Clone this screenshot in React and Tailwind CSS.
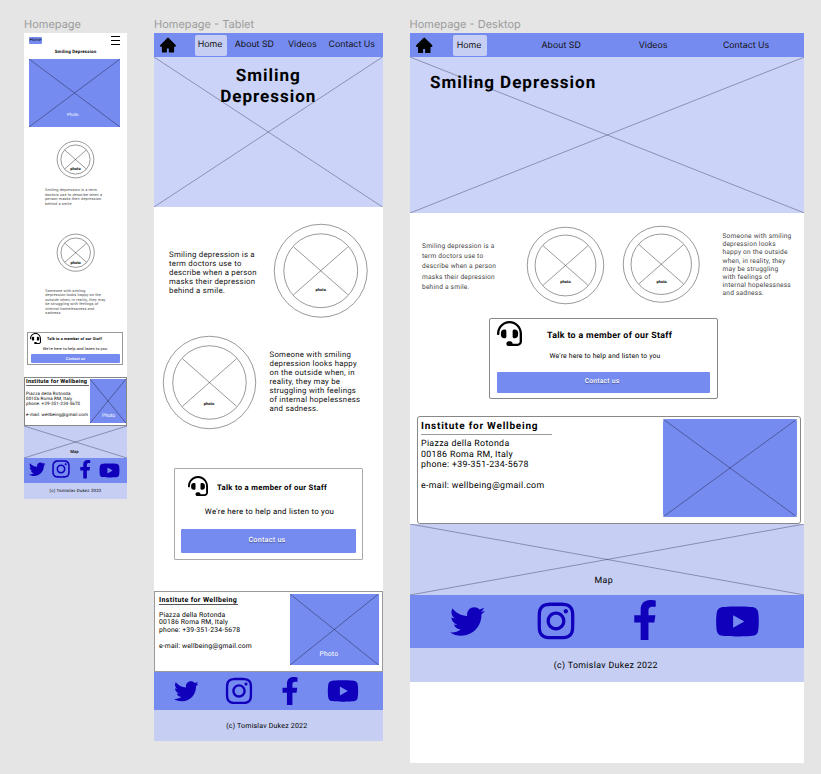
import { FaTwitter, FaInstagram, FaFacebookF, FaYoutube, FaHeadset } from "react-icons/fa";
import { AiFillHome } from "react-icons/ai";

function Cross({ className = "", opacity = 0.75 }) {
  return (
    <svg className={`absolute inset-0 w-full h-full ${className}`} viewBox="0 0 100 100" preserveAspectRatio="none" aria-hidden="true">
      <path d="M0 0 L100 100 M0 100 L100 0" stroke="#1a1d3a" strokeOpacity={opacity} strokeWidth="0.6" vectorEffect="non-scaling-stroke" fill="none" />
    </svg>
  );
}

function RoundPhoto({ className, labelClass }) {
  return (
    <div className={`relative shrink-0 flex justify-center ${className}`}>
      <svg className="absolute inset-0 w-full h-full overflow-visible" viewBox="0 0 100 100" aria-hidden="true">
        <g fill="none" stroke="#333" strokeWidth="0.5">
          <circle cx="50" cy="50" r="49.7" vectorEffect="non-scaling-stroke" />
          <circle cx="50" cy="50" r="39.5" vectorEffect="non-scaling-stroke" />
          <path d="M21 24.5 L79 75.5 M21 75.5 L79 24.5" vectorEffect="non-scaling-stroke" />
        </g>
      </svg>
      <span className={`relative font-bold text-black leading-none ${labelClass}`}>photo</span>
    </div>
  );
}

function Lines({ lines, className }) {
  return (
    <div className={`whitespace-nowrap ${className}`}>
      {lines.map((line, i) => (
        <div key={i}>{line || "\u00a0"}</div>
      ))}
    </div>
  );
}

function FrameLabel({ children }) {
  return <div className="h-4 whitespace-nowrap font-['Inter',sans-serif] text-[11px] leading-[14px] text-[#9b9b9b]">{children}</div>;
}

const address = ["Piazza della Rotonda", "00186 Roma RM, Italy", "phone: +39-351-234-5678", "", "e-mail: wellbeing@gmail.com"];

function Mobile() {
  return (
    <section className="w-[103px] shrink-0">
      <FrameLabel>Homepage</FrameLabel>
      <div className="h-[466px] bg-white flex flex-col">
        <div className="flex justify-between h-[16px] pl-[5px] pr-[7px] pt-[3px]">
          <div className="mt-px w-[13px] h-[7px] rounded-[1px] bg-[#768bf0] text-center text-[4.2px] leading-[8px]">Home</div>
          <div className="flex flex-col gap-[2.7px] w-[9px]">
            <i className="h-[1.2px] bg-black" />
            <i className="h-[1.2px] bg-black" />
            <i className="h-[1.2px] bg-black" />
          </div>
        </div>
        <h1 className="h-[10px] text-center text-[4.5px] leading-[7px] font-bold tracking-[0.13px]">Smiling Depression</h1>
        <div className="relative ml-[5px] w-[91px] h-[68px] bg-[#768bf0] shrink-0">
          <Cross />
          <span className="relative block ml-[38px] mt-[53px] text-[4.4px] leading-[8px] text-white">Photo</span>
        </div>
        <RoundPhoto className="mt-[14px] ml-[33px] w-[37px] h-[37px]" labelClass="pt-[26px] text-[4px]" />
        <Lines
          className="mt-[10.5px] ml-[21px] text-[3.8px] leading-[4.4px] tracking-[0.15px] text-[#444]"
          lines={["Smiling depression is a term", "doctors use to describe when a", "person masks their depression", "behind a smile."]}
        />
        <RoundPhoto className="mt-[27.9px] ml-[33px] w-[37.4px] h-[37.4px]" labelClass="pt-[27px] text-[4px]" />
        <Lines
          className="mt-[17.5px] ml-[21.3px] text-[3.8px] leading-[4.4px] tracking-[0.15px] text-[#444]"
          lines={["Someone with smiling", "depression looks happy on the", "outside when, in reality, they may", "be struggling with feelings of", "internal homelessness and", "sadness."]}
        />
        <div className="mt-[16.7px] ml-[3px] w-[96px] h-[33px] border border-[#999] shrink-0">
          <div className="flex items-center h-[11px] pl-[2px]">
            <FaHeadset className="w-[11px] h-[11px]" />
            <span className="ml-[6px] whitespace-nowrap text-[3.9px] leading-[5px] font-bold tracking-[0.13px]">Talk to a member of our Staff</span>
          </div>
          <p className="h-[10px] text-center whitespace-nowrap text-[3.95px] leading-[10px] tracking-[0.1px]">We're here to help and listen to you</p>
          <div className="ml-[3px] w-[89px] h-[9px] rounded-[1px] bg-[#768bf0] text-center text-[4px] leading-[9px] font-medium text-white">Contact us</div>
        </div>
        <div className="mt-[12px] flex justify-between h-[49px] shrink-0 border border-[#888] pl-[1px]">
          <div>
            <h2 className="h-[8px] w-[63px] border-b border-[#666] whitespace-nowrap text-[5.6px] leading-[9px] font-bold tracking-[0.24px]">Institute for Wellbeing</h2>
            <Lines className="mt-[5.5px] text-[4.5px] leading-[5.3px] tracking-[0.13px]" lines={address} />
          </div>
          <div className="relative mt-px w-[36px] h-[44px] bg-[#768bf0]">
            <Cross />
            <span className="relative block pl-[12px] pt-[33px] text-[5px] leading-[9px] text-white">Photo</span>
          </div>
        </div>
        <div className="relative h-[32px] shrink-0 bg-[#c6cef3] pt-[23px] text-center text-[4.2px] leading-[7px] font-medium">
          <Cross opacity={0.6} />
          <span className="relative pr-[2px]">Map</span>
        </div>
        <div className="flex items-start h-[25px] shrink-0 bg-[#768bf0] pt-[2px] text-[#1100bb]">
          <FaTwitter className="ml-[5px] mt-[1px] w-[16.5px] h-[16.5px]" />
          <FaInstagram className="ml-[5.5px] mt-[-1px] w-[20px] h-[20px]" />
          <FaFacebookF className="ml-[4.5px] w-[18.5px] h-[18.5px]" />
          <FaYoutube className="ml-[5px] mt-[-0.5px] w-[21px] h-[21px]" />
        </div>
        <div className="h-[16px] bg-[#c6cef3] text-center text-[4.4px] leading-[17px] tracking-[0.17px]">(c) Tomislav Dukez 2022</div>
      </div>
    </section>
  );
}

function Tablet() {
  return (
    <section className="ml-[27px] w-[228.5px] shrink-0">
      <FrameLabel>Homepage - Tablet</FrameLabel>
      <div className="h-[708px] bg-white flex flex-col">
        <nav className="flex items-center h-[24px] bg-[#768bf0] font-['Inter',sans-serif] text-[8.8px] leading-[12px] whitespace-nowrap text-[#111]">
          <AiFillHome className="ml-[5px] w-[18px] h-[18px] text-black" />
          <span className="ml-[18px] w-[32px] h-[21px] rounded-[2px] bg-[#c6cef3] pr-[2px] text-center leading-[20px]">Home</span>
          <span className="ml-[7.7px]">About SD</span>
          <span className="ml-[14px]">Videos</span>
          <span className="ml-[12px]">Contact Us</span>
        </nav>
        <div className="relative h-[150px] bg-[#cbd3f8] shrink-0">
          <Cross opacity={0.6} />
          <h1 className="relative pt-[9px] text-center text-[17.1px] leading-[20.5px] font-bold tracking-[0.95px] text-black">
            Smiling
            <br />
            Depression
          </h1>
        </div>
        <div className="flex mt-[17px] h-[93px] shrink-0">
          <Lines
            className="ml-[15px] mt-[26px] w-[105px] text-[7.8px] leading-[9px] tracking-[0.25px] text-[#111]"
            lines={["Smiling depression is a", "term doctors use to", "describe when a person", "masks their depression", "behind a smile."]}
          />
          <RoundPhoto className="w-[93.5px] h-[93.5px]" labelClass="pt-[64px] text-[4px]" />
        </div>
        <div className="flex mt-[19px] h-[93px] shrink-0">
          <RoundPhoto className="ml-[9px] w-[93px] h-[93px]" labelClass="pt-[66px] pr-[1px] text-[4px]" />
          <Lines
            className="ml-[13.5px] mt-[13.5px] text-[7.8px] leading-[9px] tracking-[0.25px] text-[#111]"
            lines={["Someone with smiling", "depression looks happy", "on the outside when, in", "reality, they may be", "struggling with feelings", "of internal hopelessness", "and sadness."]}
          />
        </div>
        <div className="mt-[39px] ml-[20px] w-[189px] h-[92px] shrink-0 border border-[#aaa] rounded-[1px]">
          <div className="flex items-center h-[37px] pl-[13px]">
            <FaHeadset className="mt-[-4px] w-[20px] h-[20px]" />
            <span className="ml-[9px] whitespace-nowrap text-[7.7px] font-bold tracking-[0.31px]">Talk to a member of our Staff</span>
          </div>
          <p className="h-[23px] pl-[2px] text-center whitespace-nowrap text-[7.8px] leading-[11px] tracking-[0.25px]">We're here to help and listen to you</p>
          <div className="ml-[6px] w-[175px] h-[24px] rounded-[1px] bg-[#768bf0] pr-[3px] text-center text-[7.2px] leading-[22px] font-medium tracking-[0.25px] text-white [text-shadow:0_1px_1px_#0006]">Contact us</div>
        </div>
        <div className="mt-[31px] flex justify-between h-[81px] shrink-0 border border-[#999] pl-[4px] pr-[3px]">
          <div>
            <h2 className="h-[13px] w-[79px] border-b border-[#555] whitespace-nowrap text-[7px] leading-[17px] font-bold tracking-[0.37px]">Institute for Wellbeing</h2>
            <Lines className="mt-[6.5px] text-[6.8px] leading-[7.8px] tracking-[0.16px]" lines={address} />
          </div>
          <div className="relative mt-[2px] w-[88.5px] h-[71px] bg-[#768bf0]">
            <Cross />
            <span className="relative block pl-[29.5px] pt-[55px] text-[6.8px] leading-[10px] tracking-[0.15px] text-white">Photo</span>
          </div>
        </div>
        <div className="flex items-center h-[38px] shrink-0 bg-[#768bf0] text-[#1100bb]">
          <FaTwitter className="ml-[19.5px] w-[24.5px] h-[24.5px]" />
          <FaInstagram className="ml-[26px] w-[30px] h-[30px]" />
          <FaFacebookF className="ml-[21.5px] w-[28px] h-[28px]" />
          <FaYoutube className="ml-[23px] w-[32px] h-[32px]" />
        </div>
        <div className="h-[31px] bg-[#c6cef3] pr-[3px] text-center text-[7px] leading-[32px] tracking-[0.2px]">(c) Tomislav Dukez 2022</div>
      </div>
    </section>
  );
}

function Desktop() {
  return (
    <section className="ml-[27px] w-[394.5px] shrink-0">
      <FrameLabel>Homepage - Desktop</FrameLabel>
      <div className="h-[730px] bg-white flex flex-col">
        <nav className="flex items-center h-[24px] bg-[#768bf0] font-['Inter',sans-serif] text-[8.8px] leading-[12px] whitespace-nowrap text-[#111]">
          <AiFillHome className="ml-[5.5px] w-[18.5px] h-[18.5px] text-black" />
          <span className="ml-[19.5px] w-[34px] h-[21px] rounded-[2px] bg-[#c6cef3] pr-[2px] text-center leading-[22px]">Home</span>
          <span className="ml-[54.5px] pt-[2px]">About SD</span>
          <span className="ml-[58px] pt-[2px]">Videos</span>
          <span className="ml-[55.5px] pt-[2px]">Contact Us</span>
        </nav>
        <div className="relative h-[156px] bg-[#cbd3f8] shrink-0">
          <Cross opacity={0.6} />
          <h1 className="relative pl-[20.5px] pt-[15.5px] text-[17.1px] leading-[20px] font-bold tracking-[0.95px] text-black">Smiling Depression</h1>
        </div>
        <div className="flex h-[105px] shrink-0 pl-[12.5px]">
          <Lines
            className="mt-[27.5px] w-[105px] text-[6.6px] leading-[10.4px] tracking-[0.21px] text-[#444]"
            lines={["Smiling depression is a", "term doctors use to", "describe when a person", "masks their depression", "behind a smile."]}
          />
          <RoundPhoto className="mt-[13.5px] w-[77px] h-[77px]" labelClass="pt-[53px] text-[4px]" />
          <RoundPhoto className="mt-[13px] ml-[19.3px] w-[76.5px] h-[76.5px]" labelClass="pt-[54px] text-[4px]" />
          <Lines
            className="ml-[22.7px] mt-[19px] text-[6.6px] leading-[8.2px] tracking-[0.21px] text-[#444]"
            lines={["Someone with smiling", "depression looks", "happy on the outside", "when, in reality, they", "may be struggling", "with feelings of", "internal hopelessness", "and sadness."]}
          />
        </div>
        <div className="ml-[79.5px] w-[229px] h-[81px] shrink-0 border border-[#888] rounded-[2px]">
          <div className="flex h-[32px] pl-[7px]">
            <FaHeadset className="mt-[2px] w-[25px] h-[25px]" />
            <span className="ml-[25px] mt-[11px] whitespace-nowrap text-[8.8px] leading-[12px] font-bold tracking-[0.33px]">Talk to a member of our Staff</span>
          </div>
          <p className="h-[21px] pl-[3px] text-center whitespace-nowrap text-[6.8px] leading-[11px] tracking-[0.17px]">We're here to help and listen to you</p>
          <div className="ml-[7px] w-[213px] h-[21px] rounded-[1px] bg-[#768bf0] pr-[3px] text-center text-[6.8px] leading-[19px] font-medium tracking-[0.19px] text-white [text-shadow:0_1px_1px_#0006]">Contact us</div>
        </div>
        <div className="mt-[17px] ml-[7px] flex justify-between w-[384.5px] h-[108px] shrink-0 border border-[#888] rounded-[3px] pl-[3.5px] pr-[3px]">
          <div>
            <h2 className="h-[18px] w-[131px] border-b border-[#999] whitespace-nowrap text-[10px] leading-[20px] font-bold tracking-[0.77px]">Institute for Wellbeing</h2>
            <Lines className="mt-[4.3px] text-[8.8px] leading-[10.4px] tracking-[0.33px]" lines={address} />
          </div>
          <div className="relative mt-[2px] w-[134px] h-[98px] rounded-[3px] bg-[#768bf0]">
            <Cross />
          </div>
        </div>
        <div className="relative h-[71px] shrink-0 bg-[#c6cef3] pt-[51px] pr-[6px] text-center text-[8.8px] leading-[12px] tracking-[0.3px]">
          <Cross opacity={0.6} />
          <span className="relative">Map</span>
        </div>
        <div className="flex items-center h-[53px] shrink-0 bg-[#768bf0] text-[#1100bb]">
          <FaTwitter className="ml-[40px] w-[35px] h-[35px]" />
          <FaInstagram className="ml-[50.5px] mt-[-2px] w-[42px] h-[42px]" />
          <FaFacebookF className="ml-[47.5px] mt-[-3px] w-[40px] h-[40px]" />
          <FaYoutube className="ml-[50.5px] w-[45px] h-[45px]" />
        </div>
        <div className="h-[34px] shrink-0 bg-[#c6cef3] pr-[2px] text-center text-[8.8px] leading-[36px] tracking-[0.34px]">(c) Tomislav Dukez 2022</div>
      </div>
    </section>
  );
}

export default function App() {
  return (
    <main className="flex items-start w-[821px] h-[774px] overflow-hidden bg-[#e5e5e5] pl-6 pt-[17px] font-['Roboto',sans-serif] text-black [text-rendering:geometricPrecision]">
      <Mobile />
      <Tablet />
      <Desktop />
    </main>
  );
}
